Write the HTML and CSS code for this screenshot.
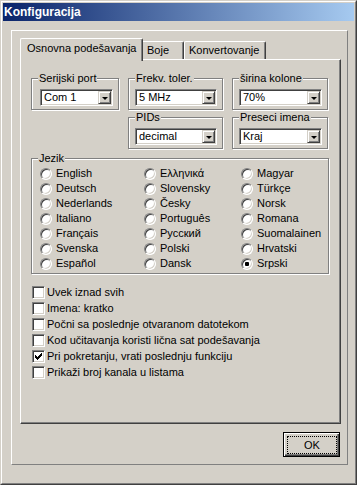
FILE: index.html
```html
<!DOCTYPE html>
<html lang="sr">
<head>
    <meta charset="UTF-8">
    <title>Konfiguracija</title>
    <link rel="stylesheet" href="styles.css">
</head>
<body>
    <div class="window">
        <div class="frame">
            <div class="titlebar">Konfiguracija</div>

            <div class="sheet">
                <!-- Kartice -->
                <div class="tabs">
                    <div class="tab active">Osnovna podešavanja</div>
                    <div class="tab tab-boje">Boje</div>
                    <div class="tab tab-konv">Konvertovanje</div>
                </div>

                <div class="page">
                    <div class="combos">
                        <fieldset class="group group-port">
                            <legend>Serijski port</legend>
                            <div class="combo"><span class="value">Com 1</span><span class="drop"></span></div>
                        </fieldset>
                        <fieldset class="group">
                            <legend>Frekv. toler.</legend>
                            <div class="combo"><span class="value">5 MHz</span><span class="drop"></span></div>
                        </fieldset>
                        <fieldset class="group">
                            <legend>širina kolone</legend>
                            <div class="combo"><span class="value">70%</span><span class="drop"></span></div>
                        </fieldset>
                        <fieldset class="group group-pids">
                            <legend>PIDs</legend>
                            <div class="combo"><span class="value">decimal</span><span class="drop"></span></div>
                        </fieldset>
                        <fieldset class="group group-preseci">
                            <legend>Preseci imena</legend>
                            <div class="combo"><span class="value">Kraj</span><span class="drop"></span></div>
                        </fieldset>
                    </div>

                    <fieldset class="group lang">
                        <legend>Jezik</legend>
                        <div class="lang-grid">
                            <label class="opt"><input type="radio" name="jezik">English</label>
                            <label class="opt"><input type="radio" name="jezik">Deutsch</label>
                            <label class="opt"><input type="radio" name="jezik">Nederlands</label>
                            <label class="opt"><input type="radio" name="jezik">Italiano</label>
                            <label class="opt"><input type="radio" name="jezik">Français</label>
                            <label class="opt"><input type="radio" name="jezik">Svenska</label>
                            <label class="opt"><input type="radio" name="jezik">Español</label>

                            <label class="opt"><input type="radio" name="jezik">Ελληνικά</label>
                            <label class="opt"><input type="radio" name="jezik">Slovensky</label>
                            <label class="opt"><input type="radio" name="jezik">Česky</label>
                            <label class="opt"><input type="radio" name="jezik">Português</label>
                            <label class="opt"><input type="radio" name="jezik">Русский</label>
                            <label class="opt"><input type="radio" name="jezik">Polski</label>
                            <label class="opt"><input type="radio" name="jezik">Dansk</label>

                            <label class="opt"><input type="radio" name="jezik">Magyar</label>
                            <label class="opt"><input type="radio" name="jezik">Türkçe</label>
                            <label class="opt"><input type="radio" name="jezik">Norsk</label>
                            <label class="opt"><input type="radio" name="jezik">Romana</label>
                            <label class="opt"><input type="radio" name="jezik">Suomalainen</label>
                            <label class="opt"><input type="radio" name="jezik">Hrvatski</label>
                            <label class="opt"><input type="radio" name="jezik" checked>Srpski</label>
                        </div>
                    </fieldset>

                    <div class="checks">
                        <label class="opt"><span class="box"></span>Uvek iznad svih</label>
                        <label class="opt"><span class="box"></span>Imena: kratko</label>
                        <label class="opt"><span class="box"></span>Počni sa poslednje otvaranom datotekom</label>
                        <label class="opt"><span class="box"></span>Kod učitavanja koristi lična sat podešavanja</label>
                        <label class="opt"><span class="box"><svg width="7" height="7" viewBox="0 0 7 7" shape-rendering="crispEdges"><path d="M0 2h1v1h1v1h1v-1h1v-1h1v-1h1v-1h1v3h-1v1h-1v1h-1v1h-1v1h-1v-1h-1v-1h-1z"/></svg></span>Pri pokretanju, vrati poslednju funkciju</label>
                        <label class="opt"><span class="box"></span>Prikaži broj kanala u listama</label>
                    </div>
                </div>

                <div class="buttons">
                    <button type="button" class="btn"><span>OK</span></button>
                </div>
            </div>
        </div>
    </div>
</body>
</html>
```

FILE: styles.css
```css
* {
    margin: 0;
    padding: 0;
    box-sizing: border-box;
}

body {
    font-family: "Liberation Sans", Arial, sans-serif;
    font-size: 11px;
    color: #000;
    background: #d4d0c8;
}

.window {
    width: 357px;
    height: 485px;
    background: #d4d0c8;
    border: 1px solid;
    border-color: #d4d0c8 #404040 #404040 #d4d0c8;
}

.frame {
    height: 100%;
    border: 1px solid;
    border-color: #fff #808080 #808080 #fff;
    padding: 1px;
}

.titlebar {
    height: 18px;
    padding-left: 1px;
    background: linear-gradient(to right, #0a246a, #a6caf0);
    color: #fff;
    font-weight: bold;
    font-size: 12px;
    line-height: 18px;
}

.sheet {
    margin: 9px 0 0 8px;
    width: 337px;
    height: 435px;
    border: 1px solid;
    border-color: #fff #808080 #808080 #fff;
    padding: 7px 6px 0 8px;
}

/* kartice */
.tabs {
    display: flex;
    align-items: flex-end;
    height: 21px;
}

.tab {
    height: 18px;
    padding: 2px 0 0 4px;
    line-height: 13px;
    background: #d4d0c8;
    border: 1px solid;
    border-bottom: none;
    border-color: #fff #404040 #404040 #fff;
    border-radius: 2px 2px 0 0;
    box-shadow: inset -1px 0 #808080;
}

.tab.active {
    position: relative;
    z-index: 1;
    width: 123px;
    height: 23px;
    margin-bottom: -2px;
    padding: 3px 0 0 6px;
}

.tab-boje {
    width: 43px;
    margin-left: -2px;
    padding-left: 5px;
}

.tab-konv {
    width: 82px;
}

.page {
    width: 321px;
    height: 365px;
    padding: 12px 0 0 10px;
    border: 1px solid;
    border-color: #fff #404040 #404040 #fff;
    box-shadow: inset -1px -1px #808080;
}

/* grupe */
.group {
    border: 1px solid #808080;
    box-shadow: inset 1px 1px #fff, 1px 1px #fff;
    padding: 0 5px 3px 6px;
    min-width: 0;
}

.group legend {
    padding: 0 1px;
    line-height: 13px;
    background: #d4d0c8;
}

.combos {
    display: grid;
    grid-template-columns: 88px 95px 96px;
    column-gap: 9px;
    row-gap: 1px;
}

.group-port .combo {
    margin-left: 2px;
}

.group-pids {
    grid-column: 2;
}

.group-preseci {
    grid-column: 3;
}

.combo {
    display: flex;
    height: 17px;
    margin-top: 4px;
    background: #fff;
    border: 1px solid;
    border-color: #808080 #fff #fff #808080;
    box-shadow: inset 1px 1px #404040, inset -1px -1px #d4d0c8;
    padding: 1px;
}

.combo .value {
    flex: 1;
    padding-left: 2px;
    line-height: 13px;
}

.combo .drop {
    width: 13px;
    height: 13px;
    background: #d4d0c8;
    border: 1px solid;
    border-color: #d4d0c8 #404040 #404040 #d4d0c8;
    box-shadow: inset 1px 1px #fff, inset -1px -1px #808080;
    display: flex;
    align-items: center;
    justify-content: center;
}

.combo .drop::after {
    content: "";
    width: 0;
    height: 0;
    margin-top: 1px;
    border-top: 3px solid #000;
    border-left: 3px solid transparent;
    border-right: 3px solid transparent;
}

/* jezik */
.lang {
    width: 298px;
    margin-top: 3px;
    padding: 1px 0 2px 6px;
}

.lang-grid {
    display: grid;
    grid-template-columns: 104px 97px auto;
    grid-template-rows: repeat(7, 15px);
    grid-auto-flow: column;
    margin-left: 2px;
}

.opt {
    display: flex;
    align-items: center;
    gap: 4px;
    line-height: 13px;
}

.opt input {
    appearance: none;
    width: 12px;
    height: 12px;
    border-radius: 50%;
    background: #fff;
    border: 1px solid;
    border-color: #808080 #fff #fff #808080;
    box-shadow: inset 1px 1px #404040, inset -1px -1px #d4d0c8;
}

.opt input:checked {
    background: radial-gradient(circle, #000 0 2px, #fff 2.5px);
}

/* opcije */
.checks {
    margin-top: 10px;
    padding-left: 1px;
}

.checks .opt {
    height: 16px;
    gap: 2px;
}

.box {
    width: 13px;
    height: 13px;
    background: #fff;
    border: 1px solid;
    border-color: #808080 #fff #fff #808080;
    box-shadow: inset 1px 1px #404040, inset -1px -1px #d4d0c8;
    display: flex;
    align-items: center;
    justify-content: center;
}

.box svg {
    display: block;
}

/* dugme */
.buttons {
    display: flex;
    justify-content: flex-end;
    margin-top: 8px;
    padding-right: 1px;
}

.btn {
    width: 57px;
    height: 25px;
    padding: 3px 2px 2px 3px;
    font: inherit;
    color: #000;
    background: #d4d0c8;
    border: 1px solid #000;
    box-shadow: inset 1px 1px #fff, inset -1px -1px #404040, inset -2px -2px #808080;
}

.btn span {
    display: flex;
    height: 100%;
    align-items: center;
    justify-content: center;
    border: 1px dotted #000;
}
```
